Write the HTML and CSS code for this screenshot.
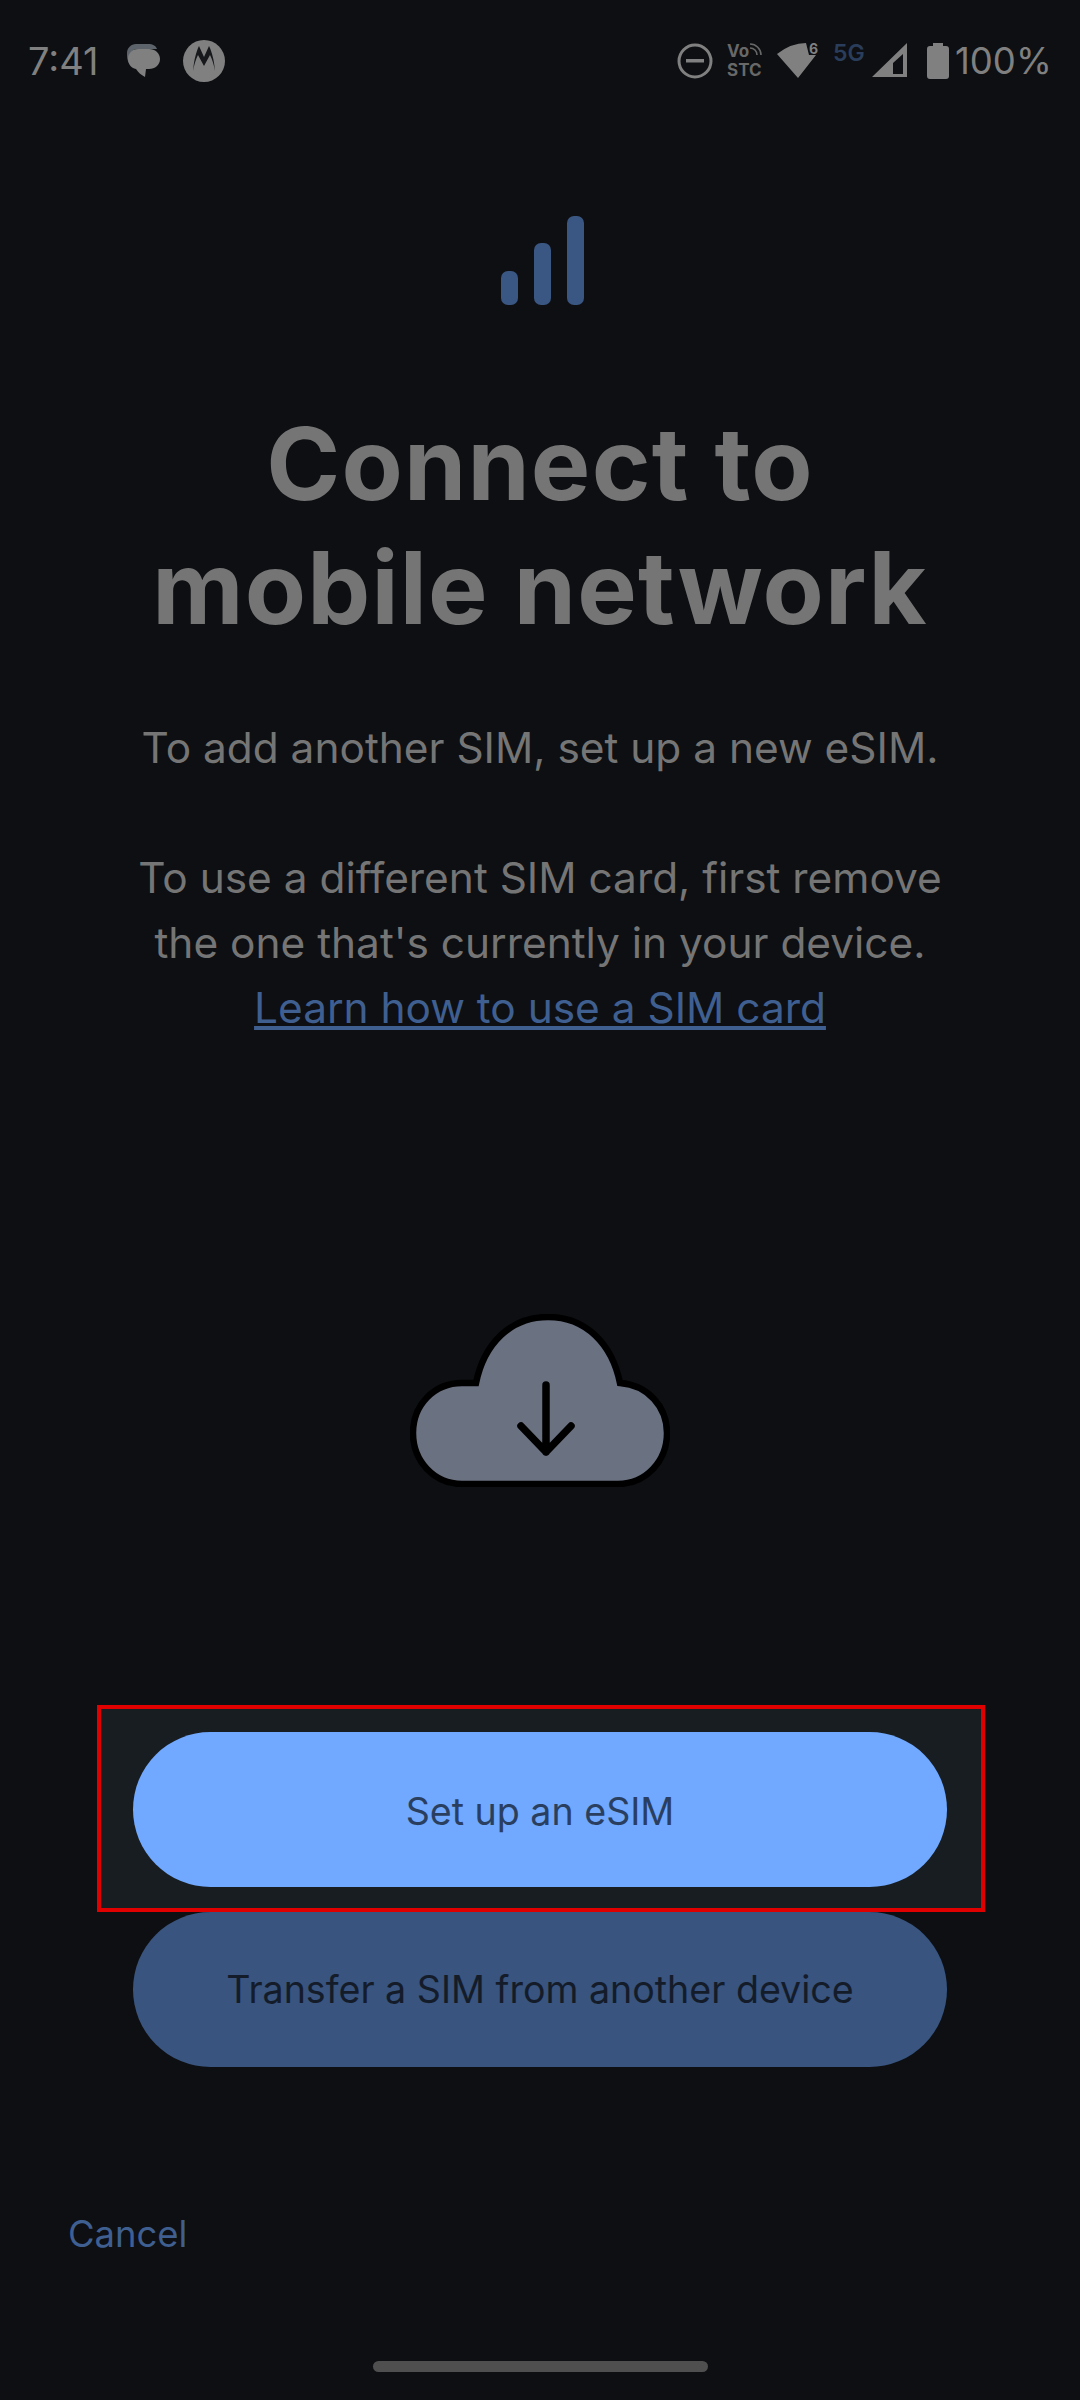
FILE: index.html
```html
<!DOCTYPE html>
<html lang="en">

<head>
    <meta charset="UTF-8">
    <meta name="viewport" content="width=device-width, initial-scale=1.0">
    <title>Connect to mobile network</title>
    <link rel="stylesheet" href="styles.css">
</head>

<body>
    <div class="screen">
        <div class="status-bar">
            <div class="status-left">
                <span class="clock">7:41</span>
                <svg class="msg-icon" width="34" height="34" viewBox="0 0 34 34">
                    <path d="M9 0h12c5 0 8 2 9 5H11C6 5 2 8 2 13v6C0 16 0 13 0 9c0-5 4-9 9-9z" fill="#5c636b"/>
                    <path d="M11 5h11c6 0 11 4 11 10s-5 10-11 10h-3l-1 8c-4-2-7-5-9-8C4 24 1 20 1 15 1 9 5 5 11 5z" fill="#808080"/>
                </svg>
                <svg class="moto-icon" width="42" height="42" viewBox="0 0 42 42">
                    <circle cx="21" cy="21" r="21" fill="#808080"/>
                    <path d="M10 31c1-11 3-19 6-25l5 11 5-11c3 6 5 14 6 25-1-6-3-12-5-16l-6 11-6-11c-2 4-4 10-5 16z" fill="#16181b"/>
                </svg>
            </div>
            <div class="status-right">
                <svg class="dnd-icon" width="36" height="36" viewBox="0 0 36 36">
                    <circle cx="18" cy="18" r="16" fill="none" stroke="#808080" stroke-width="3"/>
                    <rect x="9" y="16" width="18" height="3.5" fill="#808080"/>
                </svg>
                <div class="volte">
                    <span>Vo<svg width="14" height="14" viewBox="0 0 14 14"><path d="M1 2c6 0 11 5 11 11M1 6c4 0 7 3 7 7" fill="none" stroke="#686868" stroke-width="1.6"/></svg></span>
                    <span>STC</span>
                </div>
                <svg class="wifi-icon" width="41" height="36" viewBox="0 0 41 36">
                    <path d="M0 11Q14 0 29 0L32 12H39L21 35z" fill="#808080"/>
                    <text x="32" y="11" class="wifi-six">6</text>
                </svg>
                <span class="five-g">5G</span>
                <svg class="cell-icon" width="36" height="36" viewBox="0 0 36 36">
                    <path fill-rule="evenodd" d="M35 0v34H0zM31 11 21 20v11h10z" fill="#808080"/>
                </svg>
                <svg class="battery-icon" width="22" height="36" viewBox="0 0 22 36">
                    <path d="M6 0h10v3h3c2 0 3 1 3 3v27c0 2-1 3-3 3H3c-2 0-3-1-3-3V6c0-2 1-3 3-3h3z" fill="#808080"/>
                </svg>
                <span class="percent">100%</span>
            </div>
        </div>

        <main class="content">
            <svg class="signal-icon" width="83" height="89" viewBox="0 0 83 89">
                <rect x="0" y="55" width="17" height="34" rx="7" fill="#3a5682"/>
                <rect x="33" y="27" width="17" height="62" rx="7" fill="#3a5682"/>
                <rect x="66" y="0" width="17" height="89" rx="7" fill="#3a5682"/>
            </svg>

            <h1 class="title">Connect to<br>mobile network</h1>

            <div class="description">
                <p>To add another SIM, set up a new eSIM.</p>
                <p>To use a different SIM card, first remove<br>the one that's currently in your device.<br><a href="#">Learn how to use a SIM card</a></p>
            </div>

            <svg class="cloud-icon" width="260" height="173" viewBox="0 0 260 173">
                <path d="M66 69C74 30 100 3 138 3c38 0 64 27 72 66 28 2 47 24 47 50 0 28-21 51-49 51H52C24 170 3 147 3 119c0-28 21-50 49-50z" fill="#6a7180" stroke="#000" stroke-width="6.5"/>
                <path d="M136 71v67M111 112l25 26 25-26" fill="none" stroke="#000" stroke-width="7.5" stroke-linecap="round" stroke-linejoin="round"/>
            </svg>

            <div class="actions">
                <div class="highlight">
                    <button type="button" class="btn btn-primary">Set up an eSIM</button>
                </div>
                <button type="button" class="btn btn-secondary">Transfer a SIM from another device</button>
            </div>

            <a href="#" class="cancel">Cancel</a>
        </main>

        <div class="home-bar"></div>
    </div>
</body>

</html>
```

FILE: styles.css
```css
* {
    box-sizing: border-box;
}

body {
    margin: 0;
    background-color: #0d0f12;
    font-family: Inter, "Open Sans", sans-serif;
}

.screen {
    width: 1080px;
    height: 2400px;
    display: flex;
    flex-direction: column;
    overflow: hidden;
}

.status-bar {
    height: 80px;
    padding: 42px 30px 0 28px;
    display: flex;
    justify-content: space-between;
    align-items: center;
    color: #808080;
}

.status-left,
.status-right {
    display: flex;
    align-items: center;
}

.clock {
    width: 99px;
    font-size: 38px;
}

.msg-icon {
    margin-right: 22px;
}

.volte {
    display: flex;
    flex-direction: column;
    width: 35px;
    margin-left: 14px;
    font-size: 17px;
    font-weight: 700;
    line-height: 19px;
    color: #686868;
    white-space: nowrap;
}

.volte svg {
    vertical-align: top;
}

.wifi-icon {
    margin-left: 15px;
    overflow: visible;
}

.wifi-six {
    font-size: 14px;
    font-weight: 700;
    fill: #808080;
}

.five-g {
    width: 30px;
    margin: 0 0 16px 15px;
    font-size: 23px;
    font-weight: 600;
    color: #2a3d5a;
}

.cell-icon {
    margin-left: 9px;
}

.battery-icon {
    margin-left: 19px;
}

.percent {
    width: 95px;
    margin-left: 6px;
    font-size: 36.5px;
    white-space: nowrap;
}

.content {
    flex: 1;
    display: flex;
    flex-direction: column;
    align-items: center;
}

.signal-icon {
    margin: 136px 0 0 5px;
}

.title {
    margin: 97px 0 0;
    font-size: 100px;
    font-weight: 700;
    letter-spacing: 1.2px;
    line-height: 124px;
    text-align: center;
    color: #757575;
}

.description {
    margin-top: 65px;
    font-size: 42.4px;
    line-height: 65px;
    text-align: center;
    color: #757575;
}

.description p {
    margin: 0 0 65px;
}

.description p:last-child {
    margin-bottom: 0;
}

.description a {
    color: #3f5f91;
}

.cloud-icon {
    margin-top: 274px;
}

.actions {
    margin: 218px 0 0 2px;
    width: 888px;
    display: flex;
    flex-direction: column;
    align-items: flex-start;
}

.highlight {
    width: 100%;
    height: 207px;
    padding: 23px 32px 0;
    border: 4px solid #e00000;
    background-color: #181d21;
}

.btn {
    display: block;
    width: 814px;
    height: 155px;
    border: none;
    border-radius: 78px;
    font-family: inherit;
    font-size: 37.6px;
}

.btn-primary {
    padding-top: 4px;
    background-color: #70a9ff;
    color: #2a3f60;
}

.btn-secondary {
    margin-left: 36px;
    background-color: #38547f;
    color: #141c2a;
}

.cancel {
    align-self: flex-start;
    margin: 145px 0 0 68px;
    font-size: 36.4px;
    color: #3f5f91;
    text-decoration: none;
}

.home-bar {
    flex: none;
    align-self: center;
    width: 335px;
    height: 11px;
    margin-bottom: 28px;
    border-radius: 6px;
    background-color: #4f4f4f;
}
```
